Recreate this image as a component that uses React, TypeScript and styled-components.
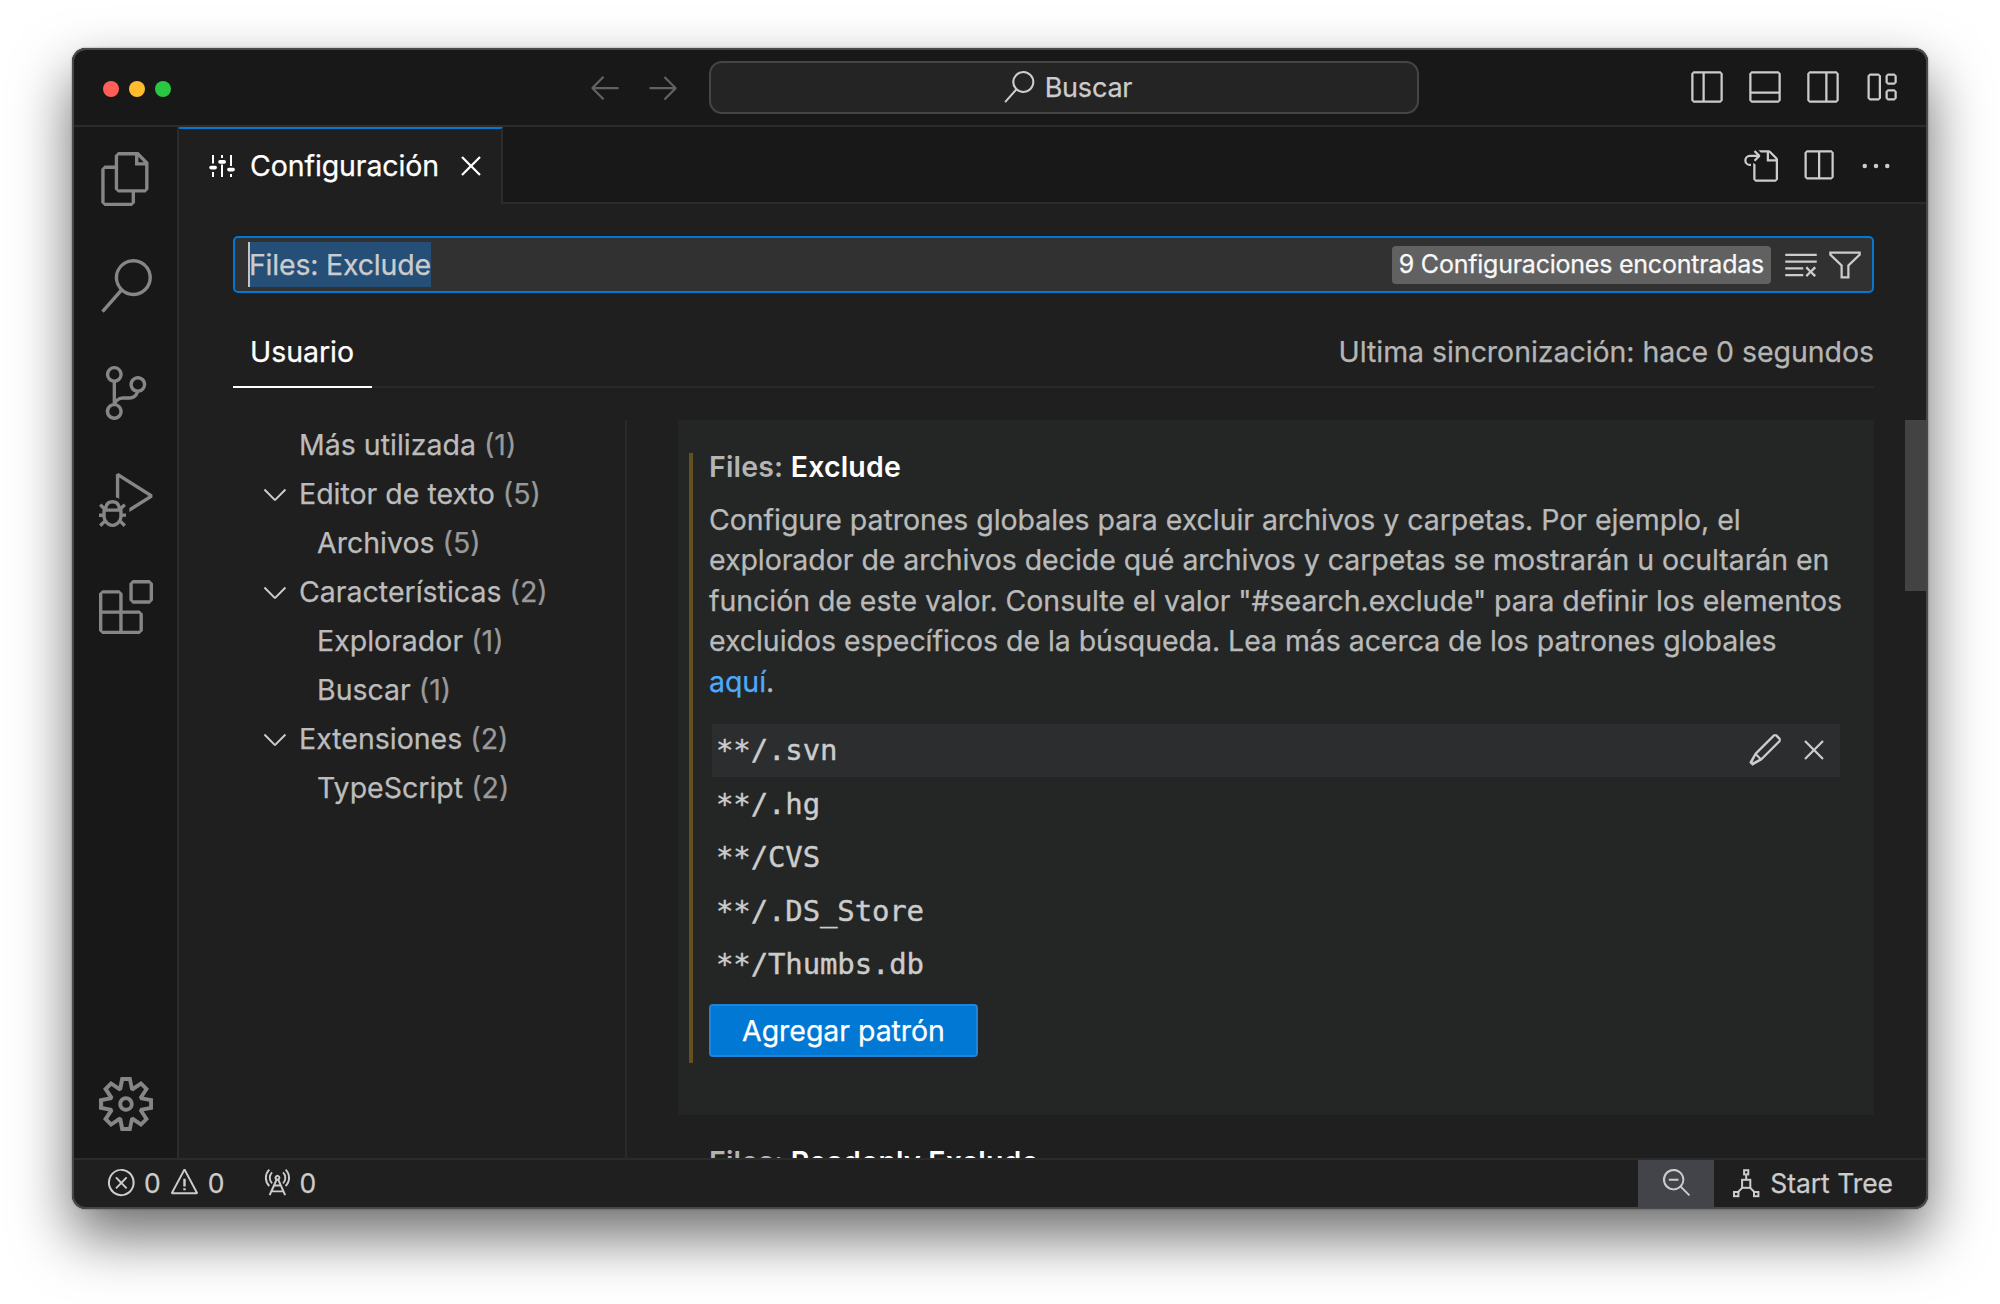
import React from "react";
import styled, { createGlobalStyle } from "styled-components";
import {
  VscArrowLeft, VscArrowRight, VscChevronDown, VscClearAll, VscClose, VscDebugAlt, VscEdit,
  VscEllipsis, VscError, VscExtensions, VscFiles, VscFilter, VscGoToFile, VscLayout,
  VscLayoutPanelOff, VscLayoutSidebarLeftOff, VscLayoutSidebarRightOff, VscRadioTower,
  VscSearch, VscSettingsGear, VscSourceControl, VscSplitHorizontal, VscWarning, VscZoomOut,
} from "react-icons/vsc";

const line = "#2b2b2b";
const sans = `Inter, Roboto, "Liberation Sans", sans-serif`;
const mono = `"DejaVu Sans Mono", "Liberation Mono", monospace`;

const Global = createGlobalStyle`
  * { box-sizing: border-box; }
  body {
    margin: 0;
    background: #fff;
    font-family: ${sans};
    font-size: 28.5px;
    letter-spacing: -0.045px;
    color: #ccc;
    -webkit-text-stroke: 0.25px;
  }
  svg { display: block; flex: none; }
`;

const Stage = styled.main`
  width: 2000px;
  height: 1304px;
  padding: 48px 72px;
  overflow: hidden;
`;

const Window = styled.div`
  position: relative;
  display: flex;
  flex-direction: column;
  width: 1856px;
  height: 1161px;
  border-radius: 14px;
  overflow: hidden;
  background: #1f1f1f;
`;

const Shadow = styled.div`
  border-radius: 14px;
  width: 1856px;
  height: 1161px;
  box-shadow: 0 0 2px rgba(0, 0, 0, 0.45), 0 27px 58px rgba(0, 0, 0, 0.58);
`;

const Rim = styled.div`
  position: absolute;
  inset: 0;
  border-radius: 14px;
  pointer-events: none;
  box-shadow: inset 0 0 0 1px #4a4a4a, inset 0 0 0 2px #454646, inset 0 2px 0 0 #636464;
`;

const TitleBar = styled.header`
  flex: none;
  display: grid;
  grid-template-columns: 637px 710px 1fr;
  align-items: center;
  height: 79px;
  background: #181818;
  border-bottom: 2px solid ${line};
`;

const TitleLeft = styled.div`
  display: flex;
  align-items: center;
  padding: 1px 28px 0 31px;
`;

const Lights = styled.div`
  display: flex;
  gap: 10px;
  margin: 3px auto 0 0;
`;

const Light = styled.span<{ $color: string }>`
  width: 16px;
  height: 16px;
  border-radius: 50%;
  background: ${(p) => p.$color};
`;

const NavArrows = styled.div`
  display: flex;
  gap: 22px;
  color: #626262;
`;

const CommandCenter = styled.div`
  display: flex;
  align-items: center;
  justify-content: center;
  gap: 10px;
  height: 53px;
  margin-top: 1px;
  padding-left: 7px;
  border: 2px solid #454545;
  border-radius: 13px;
  background: #242424;
  font-size: 27px;
  letter-spacing: -0.2px;
`;

const LayoutActions = styled.div`
  display: flex;
  justify-content: flex-end;
  gap: 22px;
  padding-right: 29px;
`;

const Body = styled.div`
  flex: 1;
  min-height: 0;
  display: flex;
`;

const ActivityBar = styled.nav`
  flex: none;
  display: flex;
  flex-direction: column;
  align-items: center;
  width: 107px;
  padding-left: 2px;
  background: #181818;
  border-right: 2px solid ${line};
  color: #868686;
`;

const ActivityItem = styled.div<{ $bottom?: boolean }>`
  display: flex;
  align-items: center;
  justify-content: center;
  width: 100%;
  height: 107px;
  padding-bottom: ${(p) => (p.$bottom ? 1 : 4)}px;
  margin-top: ${(p) => (p.$bottom ? "auto" : 0)};
`;

const Editor = styled.section`
  flex: 1;
  min-width: 0;
  display: flex;
  flex-direction: column;
`;

const Tabs = styled.div`
  flex: none;
  display: flex;
  height: 77px;
`;

const Tab = styled.div`
  flex: none;
  display: flex;
  align-items: center;
  width: 324px;
  padding: 0 14px 2px 30px;
  border-top: 2px solid #0078d4;
  border-right: 2px solid ${line};
  color: #fff;
`;

const TabLabel = styled.span`
  margin: 0 14px 0 15px;
  letter-spacing: -0.1px;
  white-space: nowrap;
`;

const TabActions = styled.div`
  flex: 1;
  display: flex;
  align-items: center;
  justify-content: flex-end;
  gap: 22px;
  padding: 2px 34px 0 0;
  background: #181818;
  border-bottom: 2px solid ${line};
`;

const SearchBox = styled.div`
  flex: none;
  display: flex;
  align-items: center;
  height: 57px;
  margin: 32px 54px 0 54px;
  padding: 0 9px 0 13px;
  border: 2px solid #0078d4;
  border-radius: 5px;
  background: #313131;
`;

const Selection = styled.span`
  height: 45px;
  line-height: 45px;
  margin-right: auto;
  border-left: 2px solid #c4c4c4;
  background: #264f78;
  letter-spacing: -0.2px;
  text-indent: -1px;
`;

const CountBadge = styled.span`
  height: 38px;
  padding: 0 7px;
  margin-right: 12px;
  border-radius: 4px;
  background: #616161;
  color: #f8f8f8;
  font-size: 25px;
  letter-spacing: -0.23px;
  line-height: 37px;
`;

const FilterIcon = styled.span`
  margin-left: 8px;
`;

const ScopeBar = styled.div`
  flex: none;
  display: flex;
  justify-content: space-between;
  height: 65px;
  margin: 30px 54px 0 54px;
  border-bottom: 2px solid #292929;
  line-height: 58px;
`;

const ScopeTab = styled.span`
  height: 65px;
  width: 139px;
  padding-left: 17px;
  border-bottom: 2px solid #fff;
  color: #fff;
`;

const SyncText = styled.span`
  color: #b5b5b5;
`;

const Split = styled.div`
  flex: 1;
  min-height: 0;
  display: flex;
  padding: 32px 0 0 54px;
`;

const Toc = styled.div`
  flex: none;
  width: 394px;
  border-right: 2px solid #2a2a2a;
`;

const TocRow = styled.div<{ $depth: number }>`
  display: flex;
  align-items: center;
  height: 49px;
  padding-left: ${(p) => (p.$depth ? 84 : 24)}px;
  color: #bcbcbc;
  letter-spacing: 0;
  white-space: pre;
`;

const TocTwistie = styled.span`
  width: 42px;
  color: #ccc;
`;

const TocCount = styled.span`
  color: #999;
`;

const Results = styled.div`
  flex: 1;
  min-width: 0;
  overflow: hidden;
  padding-left: 51px;
`;

const Setting = styled.article<{ $focused?: boolean }>`
  display: flex;
  width: 1196px;
  height: 695px;
  padding: 33px 34px 0 11px;
  background: ${(p) => (p.$focused ? "#242625" : "transparent")};
`;

const ModifiedMark = styled.div<{ $on?: boolean }>`
  flex: none;
  width: 4px;
  height: 610px;
  margin-right: 16px;
  background: ${(p) => (p.$on ? "#65501f" : "transparent")};
`;

const SettingBody = styled.div`
  flex: 1;
  min-width: 0;
`;

const SettingTitle = styled.h2`
  margin: 0;
  height: 46.5px;
  font-size: 28.5px;
  line-height: 28px;
  font-weight: 600;
  letter-spacing: 0.18px;
  color: #fff;
  -webkit-text-stroke: 0;
`;

const Category = styled.span`
  color: #b4b4b4;
`;

const Description = styled.p`
  margin: 0 -20px 0 0;
  line-height: 40.5px;
  letter-spacing: -0.055px;
  color: #b9bab9;
  white-space: nowrap;
`;

const Link = styled.a`
  color: #4daafc;
`;

const PatternList = styled.div`
  margin: 21.5px 0 13px 3px;
`;

const PatternRow = styled.div<{ $hover?: boolean }>`
  display: flex;
  align-items: center;
  gap: 13px;
  height: 53.5px;
  padding: 0 8px 0 4px;
  font-family: ${mono};
  font-size: 29px;
  letter-spacing: -0.13px;
  -webkit-text-stroke: 0.4px;
  background: ${(p) => (p.$hover ? "#2c2d2e" : "transparent")};
`;

const Pattern = styled.span`
  margin-right: auto;
`;

const AddButton = styled.button`
  display: block;
  width: 269px;
  height: 53px;
  padding: 0;
  border: 2px solid #1f84dc;
  border-radius: 4px;
  background: #0078d4;
  color: #fff;
  font: inherit;
  letter-spacing: inherit;
`;

const ScrollTrack = styled.div`
  flex: none;
  width: 23px;
`;

const ScrollThumb = styled.div`
  height: 171px;
  background: #434343;
`;

const StatusBar = styled.footer`
  flex: none;
  display: flex;
  align-items: center;
  height: 51px;
  padding: 0 35px 4px 34px;
  border-top: 2px solid ${line};
  background: #1f1f1f;
  font-size: 26.5px;
`;

const StatusItem = styled.div<{ $gap: number; $after?: number }>`
  display: flex;
  align-items: center;
  gap: ${(p) => p.$gap}px;
  margin-right: ${(p) => p.$after ?? 0}px;
`;

const ZoomItem = styled.div`
  display: flex;
  align-items: center;
  justify-content: center;
  width: 76px;
  height: 47px;
  margin: 2px 16px 0 auto;
  padding-bottom: 2px;
  background: #434449;
`;

const SlidersIcon = () => (
  <svg width="26" height="26" viewBox="0 0 26 26" fill="none" stroke="currentColor">
    <path strokeWidth="2" d="M4 2v8.5M4 19v5M13 2v3M13 11.5V24M22 2v11M22 21v3" />
    <path strokeWidth="3.6" strokeLinecap="round" d="M2 14.6h4.2M11 8.9h4.2M19.9 16.6h4.2" />
  </svg>
);

const TreeIcon = () => (
  <svg width="32" height="32" viewBox="0 0 32 32" fill="none" stroke="currentColor" strokeWidth="2">
    <rect x="14.1" y="3.2" width="4.2" height="4.2" />
    <rect x="12.1" y="12.8" width="8.2" height="8" />
    <rect x="4" y="25" width="4.4" height="4.2" />
    <rect x="24" y="25" width="4.4" height="4.2" />
    <path d="M16.2 7.4v5.4M12.4 20.6l-4.6 4.6M20 20.6l4.6 4.6" />
  </svg>
);

const activities = [VscFiles, VscSearch, VscSourceControl, VscDebugAlt, VscExtensions];

const toc = [
  { label: "Más utilizada", count: 1, depth: 0 },
  { label: "Editor de texto", count: 5, depth: 0, open: true },
  { label: "Archivos", count: 5, depth: 1 },
  { label: "Características", count: 2, depth: 0, open: true },
  { label: "Explorador", count: 1, depth: 1 },
  { label: "Buscar", count: 1, depth: 1 },
  { label: "Extensiones", count: 2, depth: 0, open: true },
  { label: "TypeScript", count: 2, depth: 1 },
];

const patterns = ["**/.svn", "**/.hg", "**/CVS", "**/.DS_Store", "**/Thumbs.db"];

export default function App() {
  return (
    <Stage>
      <Global />
      <Shadow>
        <Window>
          <TitleBar>
            <TitleLeft>
              <Lights>
                <Light $color="#ff5f57" />
                <Light $color="#febc2e" />
                <Light $color="#28c840" />
              </Lights>
              <NavArrows>
                <VscArrowLeft size={36} />
                <VscArrowRight size={36} />
              </NavArrows>
            </TitleLeft>
            <CommandCenter>
              <VscSearch size={32} />
              Buscar
            </CommandCenter>
            <LayoutActions>
              <VscLayoutSidebarLeftOff size={36} />
              <VscLayoutPanelOff size={36} />
              <VscLayoutSidebarRightOff size={36} />
              <VscLayout size={36} />
            </LayoutActions>
          </TitleBar>
          <Body>
            <ActivityBar>
              {activities.map((Icon, i) => (
                <ActivityItem key={i}>
                  <Icon size={54} />
                </ActivityItem>
              ))}
              <ActivityItem $bottom>
                <VscSettingsGear size={54} />
              </ActivityItem>
            </ActivityBar>
            <Editor>
              <Tabs>
                <Tab>
                  <SlidersIcon />
                  <TabLabel>Configuración</TabLabel>
                  <VscClose size={36} />
                </Tab>
                <TabActions>
                  <VscGoToFile size={36} />
                  <VscSplitHorizontal size={36} />
                  <VscEllipsis size={36} />
                </TabActions>
              </Tabs>
              <SearchBox>
                <Selection>Files: Exclude</Selection>
                <CountBadge>9 Configuraciones encontradas</CountBadge>
                <VscClearAll size={36} />
                <FilterIcon>
                  <VscFilter size={36} />
                </FilterIcon>
              </SearchBox>
              <ScopeBar>
                <ScopeTab>Usuario</ScopeTab>
                <SyncText>Ultima sincronización: hace 0 segundos</SyncText>
              </ScopeBar>
              <Split>
                <Toc>
                  {toc.map((t) => (
                    <TocRow key={t.label} $depth={t.depth}>
                      {t.depth === 0 && <TocTwistie>{t.open && <VscChevronDown size={36} />}</TocTwistie>}
                      {t.label} <TocCount>({t.count})</TocCount>
                    </TocRow>
                  ))}
                </Toc>
                <Results>
                  <Setting $focused>
                    <ModifiedMark $on />
                    <SettingBody>
                      <SettingTitle>
                        <Category>Files: </Category>Exclude
                      </SettingTitle>
                      <Description>
                        Configure patrones globales para excluir archivos y carpetas. Por ejemplo, el
                        <br />
                        explorador de archivos decide qué archivos y carpetas se mostrarán u ocultarán en
                        <br />
                        función de este valor. Consulte el valor "#search.exclude" para definir los elementos
                        <br />
                        excluidos específicos de la búsqueda. Lea más acerca de los patrones globales
                        <br />
                        <Link>aquí</Link>.
                      </Description>
                      <PatternList>
                        {patterns.map((p, i) => (
                          <PatternRow key={p} $hover={i === 0}>
                            <Pattern>{p}</Pattern>
                            {i === 0 && (
                              <>
                                <VscEdit size={36} />
                                <VscClose size={36} />
                              </>
                            )}
                          </PatternRow>
                        ))}
                      </PatternList>
                      <AddButton>Agregar patrón</AddButton>
                    </SettingBody>
                  </Setting>
                  <Setting>
                    <ModifiedMark />
                    <SettingBody>
                      <SettingTitle>
                        <Category>Files: </Category>Readonly Exclude
                      </SettingTitle>
                    </SettingBody>
                  </Setting>
                </Results>
                <ScrollTrack>
                  <ScrollThumb />
                </ScrollTrack>
              </Split>
            </Editor>
          </Body>
          <StatusBar>
            <StatusItem $gap={7} $after={8}>
              <VscError size={31} />0
            </StatusItem>
            <StatusItem $gap={8} $after={37}>
              <VscWarning size={31} />0
            </StatusItem>
            <StatusItem $gap={7}>
              <VscRadioTower size={31} />0
            </StatusItem>
            <ZoomItem>
              <VscZoomOut size={31} />
            </ZoomItem>
            <StatusItem $gap={8}>
              <TreeIcon />
              Start Tree
            </StatusItem>
          </StatusBar>
          <Rim />
        </Window>
      </Shadow>
    </Stage>
  );
}
